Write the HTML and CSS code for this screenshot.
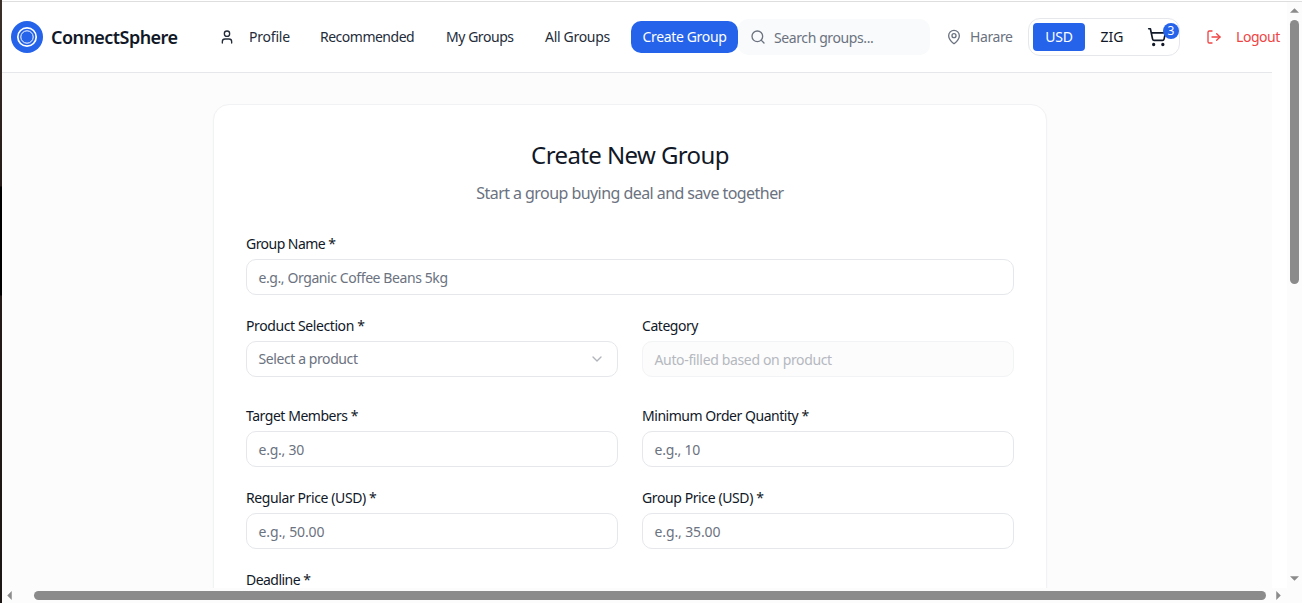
FILE: index.html
```
<!DOCTYPE html>
<html lang="en">
<head>
<meta charset="utf-8">
<title>ConnectSphere</title>
<link rel="stylesheet" href="styles.css">
</head>
<body>
<div class="window">
  <div class="edge"></div>
  <div class="topline"></div>
  <div class="viewport">
    <div class="page">
      <header class="header">
        <a class="brand">
          <svg class="logo" viewBox="0 0 32 32" fill="none"><circle cx="16" cy="16" r="16" fill="#2563eb"/><circle cx="16" cy="16" r="9.2" stroke="#fff" stroke-width="1.7"/><circle cx="16" cy="16" r="6.2" stroke="#fff" stroke-width="1"/></svg>
          <span class="brand-name">ConnectSphere</span>
        </a>
        <nav class="nav">
          <a class="link profile"><svg class="icon" viewBox="0 0 24 24"><path d="M19 21v-2a4 4 0 0 0-4-4H9a4 4 0 0 0-4 4v2"/><circle cx="12" cy="7" r="4"/></svg><span>Profile</span></a>
          <a class="link recommended">Recommended</a>
          <a class="link mine">My Groups</a>
          <a class="link all">All Groups</a>
          <a class="create"><span>Create Group</span></a>
        </nav>
        <div class="search"><svg class="icon" viewBox="0 0 24 24"><circle cx="11" cy="11" r="8"/><path d="m21 21-4.3-4.3"/></svg><span>Search groups...</span></div>
        <div class="place"><svg class="icon" viewBox="0 0 24 24"><path d="M20 10c0 4.993-5.539 10.193-7.399 11.799a1 1 0 0 1-1.202 0C9.539 20.193 4 14.993 4 10a8 8 0 0 1 16 0"/><circle cx="12" cy="10" r="3"/></svg><span>Harare</span></div>
        <div class="currency">
          <span class="usd">USD</span>
          <span class="zig">ZIG</span>
          <span class="cart"><svg class="cart-icon" viewBox="0 0 24 24"><circle cx="8" cy="21" r="1"/><circle cx="19" cy="21" r="1"/><path d="M2.05 2.05h2l2.66 12.42a2 2 0 0 0 2 1.58h9.78a2 2 0 0 0 1.95-1.57l1.65-7.43H5.12"/></svg><span class="badge">3</span></span>
        </div>
        <a class="logout"><svg class="icon" viewBox="0 0 24 24"><path d="M9 21H5a2 2 0 0 1-2-2V5a2 2 0 0 1 2-2h4"/><path d="m16 17 5-5-5-5"/><path d="M21 12H9"/></svg><span>Logout</span></a>
      </header>
      <main class="content">
        <section class="card">
          <h1 class="title"><span>Create New Group</span></h1>
          <p class="subtitle"><span>Start a group buying deal and save together</span></p>
          <form class="form">
            <div class="field wide"><label class="tight">Group Name *</label><div class="input"><span>e.g., Organic Coffee Beans 5kg</span></div></div>
            <div class="field spaced"><label class="snug">Product Selection *</label><div class="input select"><span>Select a product</span><svg class="icon" viewBox="0 0 24 24"><path d="m6 9 6 6 6-6"/></svg></div></div>
            <div class="field spaced"><label>Category</label><div class="input disabled"><span>Auto-filled based on product</span></div></div>
            <div class="field"><label>Target Members *</label><div class="input amount"><span>e.g., 30</span></div></div>
            <div class="field"><label>Minimum Order Quantity *</label><div class="input amount"><span>e.g., 10</span></div></div>
            <div class="field"><label class="snug">Regular Price (USD) *</label><div class="input price"><span>e.g., 50.00</span></div></div>
            <div class="field"><label class="snug">Group Price (USD) *</label><div class="input price"><span>e.g., 35.00</span></div></div>
            <div class="field wide"><label class="tight">Deadline *</label><div class="input"></div></div>
          </form>
        </section>
      </main>
    </div>
  </div>
  <div class="vbar"><svg class="arrow" viewBox="0 0 10 5"><path d="M5 0l5 5H0z"/></svg><div class="vthumb"></div><svg class="arrow" viewBox="0 0 10 5"><path d="M0 0h10L5 5z"/></svg></div>
  <div class="hbar"><svg class="harrow" viewBox="0 0 5 10"><path d="M5 0v10L0 5z"/></svg><div class="hthumb"></div><svg class="harrow" viewBox="0 0 5 10"><path d="M0 0l5 5-5 5z"/></svg></div>
</div>
</body>
</html>
```
FILE: styles.css
```
* { box-sizing: border-box; }
body { margin: 0; font: 14px/20px "Noto Sans", "Open Sans", sans-serif; color: #111827; }
.window { display: grid; grid-template: 2px 586px 15px / 2px 1285px 15px; width: 1302px; height: 603px; overflow: hidden; background: #fff; }
.edge { grid-row: 1 / 4; background: linear-gradient(#3c302a, #241a17 186px, #000 187px, #000 295px, #241a17 296px, #1c1614); }
.topline { grid-column: 2 / 4; border-bottom: 1px solid #dedede; }
.viewport { grid-column: 2; overflow: hidden; min-height: 0; }
.page { width: 1270px; height: 586px; background: #fcfcfd; }
.header { display: flex; align-items: center; height: 71px; width: 1270px; padding-left: 9px; background: #fff; border-bottom: 1px solid #e5e7eb; white-space: nowrap; }
.header > * { flex: none; }
.icon { width: 16px; height: 16px; flex: none; fill: none; stroke: currentColor; stroke-width: 2; stroke-linecap: round; stroke-linejoin: round; }
.brand { display: flex; align-items: center; gap: 8px; width: 208px; }
.logo { width: 32px; height: 32px; }
.brand-name { font-size: 18px; font-weight: 600; line-height: 28px; letter-spacing: -.55px; }
.nav { display: flex; align-items: center; color: #242c3a; }
.profile { display: flex; align-items: center; gap: 14px; width: 101px; letter-spacing: -.2px; }
.recommended { width: 126px; letter-spacing: -.5px; }
.mine { width: 99px; letter-spacing: -.45px; }
.all { width: 86px; letter-spacing: -.3px; }
.create { display: flex; align-items: center; justify-content: center; width: 107px; height: 32px; border-radius: 10px; background: #2563eb; color: #fff; letter-spacing: -.35px; }
.search { display: flex; align-items: center; gap: 8px; width: 192px; height: 36px; padding-left: 12px; border-radius: 10px; background: #f9fafb; color: #6b7280; letter-spacing: -.4px; }
.search span { padding-top: 2px; }
.place { display: flex; align-items: center; gap: 8px; width: 98px; padding-left: 16px; color: #6b7280; letter-spacing: -.4px; }
.currency { display: flex; align-items: center; width: 152px; height: 38px; padding: 0 3px 0 4px; border: 1px solid #e5e7eb; border-radius: 12px; }
.usd { width: 52px; height: 28px; line-height: 28px; text-align: center; border-radius: 4px; background: #2563eb; color: #fff; letter-spacing: -.2px; }
.zig { width: 53px; padding-left: 1px; text-align: center; }
.cart { position: relative; width: 36px; height: 20px; padding-left: 9px; }
.cart-icon { display: block; width: 20px; height: 20px; fill: none; stroke: #111827; stroke-width: 2; stroke-linecap: round; stroke-linejoin: round; }
.badge { position: absolute; left: 25px; top: -4px; width: 16px; height: 16px; border-radius: 8px; background: #2563eb; color: #fff; font-size: 12px; line-height: 16px; text-align: center; }
.logout { display: flex; align-items: center; gap: 14px; margin-left: 26px; color: #ef4444; letter-spacing: -.45px; }
.content { height: 515px; padding: 31px 211px 0; overflow: hidden; }
.card { width: 834px; height: 700px; padding: 32px 32px 0; border: 1px solid #f1f2f4; border-radius: 16px; background: #fff; box-shadow: 0 1px 2px rgba(0,0,0,.03); }
.title { margin: 0; font-size: 24px; font-weight: 400; line-height: 36px; letter-spacing: -.6px; text-align: center; }
.subtitle { margin: 8px 0 32px; font-size: 16px; line-height: 24px; letter-spacing: -.56px; text-align: center; color: #6b7280; }
.form { display: grid; grid-template-columns: 372px 372px; gap: 24px; }
.field { display: flex; flex-direction: column; gap: 8px; }
.wide { grid-column: 1 / 3; }
.spaced { margin-bottom: 8px; }
label { line-height: 14px; letter-spacing: -.46px; }
.tight { letter-spacing: -.54px; }
.snug { letter-spacing: -.4px; }
.input { display: flex; align-items: center; justify-content: space-between; height: 36px; padding: 2px 12px 0 11.5px; border: 1px solid #e5e7eb; border-radius: 10px; color: #6b7280; letter-spacing: -.41px; }
.amount { letter-spacing: -.25px; }
.price { letter-spacing: -.12px; }
.select { padding-top: 0; }
.select .icon { color: #b0b4bb; }
.disabled { border-color: #f2f3f5; background: #fcfcfc; color: #b5b8bf; letter-spacing: -.35px; }
.vbar { display: flex; flex-direction: column; align-items: center; justify-content: space-between; padding: 6px 1px 7px 0; background: #fcfcfc; }
.arrow { width: 9px; height: 5px; fill: #8b8b8b; }
.vthumb { width: 9px; height: 264px; margin: 7px 0 auto; border-radius: 5px; background: #8b8b8b; }
.hbar { grid-column: 2 / 4; display: flex; align-items: center; padding: 0 20px 0 5px; background: #fcfcfc; }
.harrow { width: 5px; height: 9px; fill: #8b8b8b; }
.hthumb { width: 1232px; height: 9px; margin: 0 10px 0 22px; border-radius: 5px; background: #8b8b8b; }
```
